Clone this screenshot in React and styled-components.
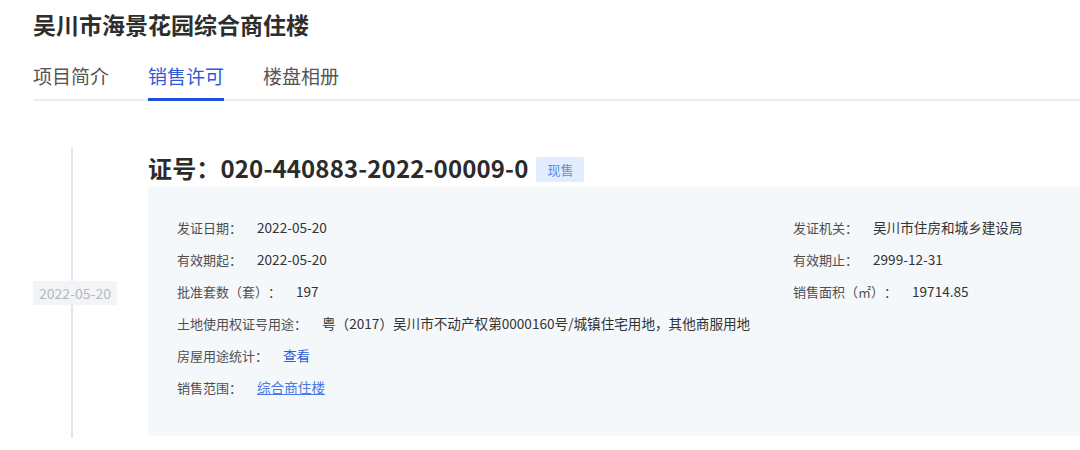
import styled, { createGlobalStyle } from "styled-components";

const GlobalStyle = createGlobalStyle`
	html, body {
		margin: 0;
		padding: 0;
		background: #fff;
		font-family: "Noto Sans CJK SC", "Noto Sans", sans-serif;
		overflow: hidden;
		text-spacing-trim: space-all;
	}
`;

const leftRows = [
	{ label: "发证日期：", value: "2022-05-20" },
	{ label: "有效期起：", value: "2022-05-20" },
	{ label: "批准套数（套）：", value: "197" },
	{ label: "土地使用权证号用途：", value: "粤（2017）吴川市不动产权第0000160号/城镇住宅用地，其他商服用地" },
	{ label: "房屋用途统计：", value: "查看", kind: "link" },
	{ label: "销售范围：", value: "综合商住楼", kind: "underline" },
];

const rightRows = [
	{ label: "发证机关：", value: "吴川市住房和城乡建设局" },
	{ label: "有效期止：", value: "2999-12-31" },
	{ label: "销售面积（㎡）：", value: "19714.85" },
];

const tabs = ["项目简介", "销售许可", "楼盘相册"];

const App = () => {
	return (
		<>
			<GlobalStyle />
			<StyledPage>
				<StyledTitle>吴川市海景花园综合商住楼</StyledTitle>
				<StyledTabs>
					{tabs.map((t, i) => (
						<StyledTab key={t} $active={i === 1}>
							{t}
						</StyledTab>
					))}
				</StyledTabs>
				<StyledTimeline>
					<StyledRail>
						<StyledLine />
						<StyledDate>2022-05-20</StyledDate>
						<StyledLine />
					</StyledRail>
					<StyledItem>
						<StyledHeadRow>
							<StyledHeading>证号：020-440883-2022-00009-0</StyledHeading>
							<StyledTag>现售</StyledTag>
						</StyledHeadRow>
						<StyledPanel>
							<StyledColumn>
								{leftRows.map((r) => (
									<StyledRow key={r.label}>
										<StyledLabel>{r.label}</StyledLabel>
										<StyledValue $kind={r.kind}>{r.value}</StyledValue>
									</StyledRow>
								))}
							</StyledColumn>
							<StyledColumn>
								{rightRows.map((r) => (
									<StyledRow key={r.label}>
										<StyledLabel>{r.label}</StyledLabel>
										<StyledValue>{r.value}</StyledValue>
									</StyledRow>
								))}
							</StyledColumn>
						</StyledPanel>
					</StyledItem>
				</StyledTimeline>
			</StyledPage>
		</>
	);
};
export default App;

const StyledPage = styled.div`
	width: 1080px;
	height: 450px;
	padding-left: 33px;
	box-sizing: border-box;
	overflow: hidden;
`;
const StyledTitle = styled.h1`
	margin: 0;
	padding-top: 9px;
	font-size: 23px;
	line-height: 30px;
	font-weight: 700;
	color: #2e2e2e;
`;
const StyledTabs = styled.div`
	display: flex;
	gap: 39px;
	margin-top: 24px;
	border-bottom: 2px solid #ececec;
`;
const StyledTab = styled.div`
	font-size: 19px;
	line-height: 26px;
	color: ${(p) => (p.$active ? "#2f5bd8" : "#555")};
	box-shadow: ${(p) => (p.$active ? "inset 0 -3px 0 #1d4fd8" : "none")};
	margin-bottom: -2px;
	padding-bottom: 12px;
`;
const StyledTimeline = styled.div`
	display: flex;
	margin-top: 47px;
`;
const StyledRail = styled.div`
	width: 115px;
	flex-shrink: 0;
	display: flex;
	flex-direction: column;
	align-items: flex-start;
	margin-bottom: -2px;
`;
const StyledLine = styled.div`
	flex: 1;
	width: 2px;
	margin-left: 38px;
	background: #e1e5ec;
`;
const StyledDate = styled.div`
	width: 84px;
	height: 24px;
	display: flex;
	align-items: center;
	justify-content: center;
	background: #f3f4f7;
	color: #b3b8c2;
	font-size: 14px;
	border-radius: 2px;
`;
const StyledItem = styled.div`
	flex: 1;
	display: flex;
	flex-direction: column;
`;
const StyledHeadRow = styled.div`
	display: flex;
	align-items: center;
	height: 39px;
`;
const StyledHeading = styled.h2`
	margin: 0;
	font-size: 24px;
	line-height: 32px;
	font-weight: 700;
	letter-spacing: 0.15px;
	color: #2b2b2b;
`;
const StyledTag = styled.span`
	margin-left: 8px;
	margin-top: 3px;
	height: 25px;
	padding: 0 11px;
	display: flex;
	align-items: center;
	background: #e1edfd;
	color: #5b8cef;
	font-size: 13px;
	border-radius: 2px;
`;
const StyledPanel = styled.div`
	height: 249px;
	box-sizing: border-box;
	background: #f5f8fb;
	padding: 24px 0 0 29px;
	display: grid;
	grid-template-columns: 616px 1fr;
`;
const StyledColumn = styled.div`
	display: flex;
	flex-direction: column;
`;
const StyledRow = styled.div`
	display: flex;
	align-items: center;
	height: 32px;
	font-size: 13px;
	white-space: nowrap;
`;
const StyledLabel = styled.span`
	color: #4f4f4f;
	margin-right: 15px;
`;
const StyledValue = styled.span`
	color: ${(p) =>
		p.$kind === "link" ? "#2f5fd0" : p.$kind === "underline" ? "#4a7ae6" : "#333"};
	text-decoration: ${(p) => (p.$kind === "underline" ? "underline" : "none")};
	font-size: 13.6px;
`;
